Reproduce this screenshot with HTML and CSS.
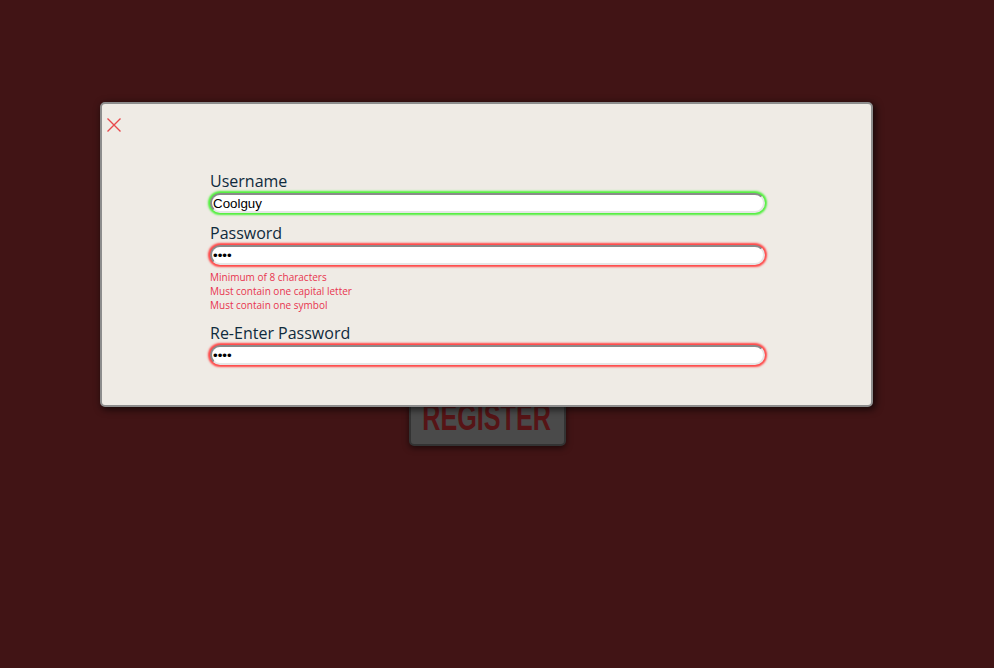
FILE: index.html
```html
<!DOCTYPE html>
<html lang="en">
<head>
<meta charset="utf-8">
<title>Register</title>
<link rel="stylesheet" href="styles.css">
</head>
<body>
<main class="page">
  <button class="register-btn" type="button"><span class="register-text">REGISTER</span></button>
</main>
<div class="modal">
  <button class="close" type="button" aria-label="Close">
    <svg width="16" height="16" viewBox="0 0 16 16"><path d="M1.5 1.5 L14.5 14.5 M14.5 1.5 L1.5 14.5" stroke="#e8484c" stroke-width="1.4" fill="none"/></svg>
  </button>
  <form class="form">
    <label class="label" for="u">Username</label>
    <input id="u" class="field valid" type="text" value="Coolguy">
    <label class="label gap" for="p">Password</label>
    <input id="p" class="field invalid" type="password" value="1234">
    <ul class="errors">
      <li>Minimum of 8 characters</li>
      <li>Must contain one capital letter</li>
      <li>Must contain one symbol</li>
    </ul>
    <label class="label gap" for="r">Re-Enter Password</label>
    <input id="r" class="field invalid" type="password" value="1234">
  </form>
</div>
</body>
</html>
```

FILE: styles.css
```css
html, body {
  margin: 0;
  padding: 0;
}
body {
  background: #411415;
  width: 994px;
  height: 668px;
  overflow: hidden;
  font-family: "Open Sans", sans-serif;
}
.page {
  padding-top: 390px;
  display: flex;
  justify-content: center;
}
.register-btn {
  width: 157px;
  height: 56px;
  margin-left: -20px;
  background: #4a4a4a;
  border: 2px solid #333333;
  border-radius: 5px;
  box-shadow: 0 2px 6px rgba(0,0,0,0.55);
  padding: 0;
  display: flex;
  align-items: flex-end;
  justify-content: center;
}
.register-text {
  display: inline-block;
  font-family: "Liberation Sans", Arial, sans-serif;
  font-weight: bold;
  font-size: 37px;
  line-height: 44px;
  color: #561416;
  transform: scaleX(0.68);
  margin-bottom: 4px;
}
.modal {
  position: absolute;
  left: 100px;
  top: 102px;
  width: 769px;
  height: 301px;
  background: #efebe5;
  border: 2px solid #8d8d8d;
  border-radius: 5px;
  box-shadow: 2px 2px 7px 1px rgba(0,0,0,0.6);
}
.close {
  position: absolute;
  left: 4px;
  top: 13px;
  width: 16px;
  height: 16px;
  padding: 0;
  border: 0;
  background: none;
  display: block;
}
.close svg { display: block; }
.form {
  padding: 66px 0 0 108px;
  display: flex;
  flex-direction: column;
  align-items: flex-start;
}
.label {
  font-size: 16px;
  line-height: 22px;
  color: #0e2a3c;
  margin-bottom: 1px;
}
.label.gap { margin-top: 9px; }
.field {
  box-sizing: border-box;
  width: 555px;
  height: 20px;
  margin: 0;
  padding: 0 1px;
  border: 2px solid;
  border-color: #8a8a8a #e6e6e6 #e6e6e6 #8a8a8a;
  border-radius: 10px;
  background: #ffffff;
  font-family: "Liberation Sans", Arial, sans-serif;
  font-size: 13.33px;
  color: #000;
  outline: none;
}
.field.valid {
  box-shadow: 0 0 2px 2px rgba(80,240,60,1);
}
.field.invalid {
  box-shadow: 0 0 2px 2px rgba(255,70,70,1);
}
.errors {
  list-style: none;
  margin: 5px 0 1px 0;
  padding: 0;
  font-size: 10px;
  line-height: 14px;
  color: #e8344f;
}
```
